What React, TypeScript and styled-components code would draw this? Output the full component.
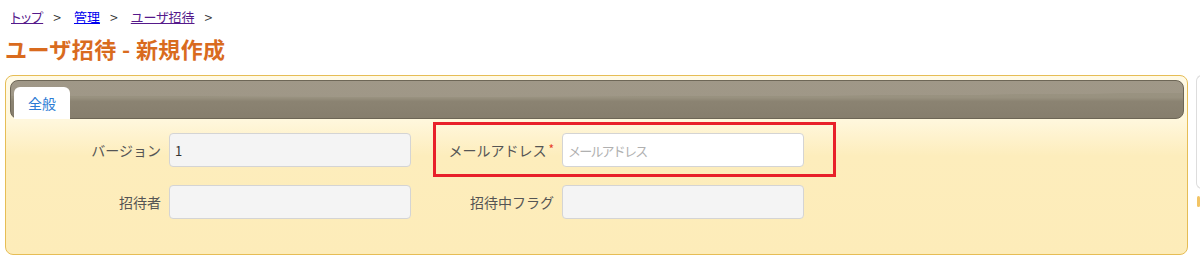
import styled, { createGlobalStyle } from "styled-components";

const GlobalStyle = createGlobalStyle`
  html, body {
    margin: 0;
    padding: 0;
    background: #ffffff;
    font-family: "Noto Sans CJK JP", "Noto Sans", sans-serif;
    color: #333;
  }
`;

const Page = styled.div`
  width: 1200px;
  height: 277px;
  overflow: hidden;
  padding: 6px 0 0 5px;
  box-sizing: border-box;
`;

const Breadcrumb = styled.nav`
  display: flex;
  align-items: center;
  height: 22px;
  padding-left: 6px;
  font-size: 13px;
  line-height: 22px;
  font-feature-settings: "palt";
`;

const Crumb = styled.a<{ $visited?: boolean }>`
  color: ${({ $visited }) => ($visited ? "#551a8b" : "#0000ee")};
  text-decoration: underline;
`;

const Sep = styled.span`
  color: #333;
  font-size: 14px;
  margin: 0 13px 0 10px;
`;

const Title = styled.h1`
  margin: 2px 0 0 0;
  height: 45px;
  font-size: 22px;
  line-height: 36px;
  font-weight: 700;
  letter-spacing: 0.4px;
  color: #d96b1e;
`;

const Body = styled.div`
  display: flex;
  align-items: flex-start;
  gap: 8px;
`;

const Panel = styled.section`
  flex: 0 0 1183px;
  height: 180px;
  box-sizing: border-box;
  border: 1px solid #e6bd55;
  border-radius: 8px;
  padding: 4px 3px 0 4px;
  background: linear-gradient(#fffae6 0px, #fff7dc 45px, #fdedbc 80px, #fdecb9 100%);
`;

const TabBar = styled.div`
  display: flex;
  align-items: flex-end;
  height: 39px;
  box-sizing: border-box;
  border: 1px solid #6d6656;
  border-radius: 8px;
  padding: 0 0 0 3px;
  background:
    radial-gradient(160% 70% at 35% 0%, rgba(160, 152, 136, 0.9) 0 60%, transparent 61%),
    linear-gradient(#9d9685 0%, #98917f 45%, #8b8372 55%, #867e6d 100%);
`;

const Tab = styled.div<{ $active?: boolean }>`
  width: 56px;
  height: 32px;
  display: flex;
  align-items: center;
  justify-content: center;
  margin-bottom: -1px;
  background: ${({ $active }) => ($active ? "#ffffff" : "transparent")};
  border-radius: 6px 6px 0 0;
  font-size: 14px;
  color: #2b7bd4;
`;

const Form = styled.div`
  display: grid;
  grid-template-columns: 370px 370px;
  column-gap: 23px;
  row-gap: 18px;
  padding: 14px 0 0 31px;
`;

const Field = styled.div<{ $marked?: boolean }>`
  position: relative;
  display: flex;
  align-items: center;
  gap: 8px;

  ${({ $marked }) =>
    $marked &&
    `
    &::after {
      content: "";
      position: absolute;
      top: -11px;
      left: -1px;
      right: -32px;
      bottom: -10px;
      border: 3px solid #e8202a;
      pointer-events: none;
    }
  `}
`;

const Label = styled.label`
  width: 120px;
  text-align: right;
  font-size: 14px;
  color: #555;
  white-space: nowrap;
`;

const Required = styled.span`
  color: #e8402a;
  font-size: 12px;
  vertical-align: top;
  margin-left: 2px;
`;

const Input = styled.input<{ $readonly?: boolean }>`
  width: 242px;
  height: 34px;
  box-sizing: border-box;
  border: 1px solid #d4d4d4;
  border-radius: 4px;
  background: ${({ $readonly }) => ($readonly ? "#f4f4f4" : "#ffffff")};
  padding: 0 5px;
  font-family: "Noto Sans CJK JP", "Noto Sans", sans-serif;
  font-size: 13px;
  color: #333;
  outline: none;

  &::placeholder {
    color: #b0b0b0;
    font-size: 13px;
    letter-spacing: -1.8px;
  }
`;

const SidePanel = styled.div`
  flex: 0 0 auto;
  display: flex;
  flex-direction: column;
  gap: 7px;
`;

const SideCard = styled.div`
  width: 20px;
  height: 114px;
  box-sizing: border-box;
  border: 1px solid #dddddd;
  border-right: none;
  border-radius: 6px 0 0 6px;
  background: #ffffff;
`;

const SideMark = styled.div`
  width: 3px;
  height: 11px;
  margin-left: 1px;
  border-radius: 2px;
  background: #f2c465;
`;

export default function App() {
  return (
    <>
      <GlobalStyle />
      <Page>
        <Breadcrumb>
          <Crumb href="#" $visited>
            トップ
          </Crumb>
          <Sep>&gt;</Sep>
          <Crumb href="#">管理</Crumb>
          <Sep>&gt;</Sep>
          <Crumb href="#" $visited>
            ユーザ招待
          </Crumb>
          <Sep>&gt;</Sep>
        </Breadcrumb>
        <Title>ユーザ招待 - 新規作成</Title>
        <Body>
          <Panel>
            <TabBar>
              <Tab $active>全般</Tab>
            </TabBar>
            <Form>
              <Field>
                <Label>バージョン</Label>
                <Input $readonly readOnly defaultValue="1" />
              </Field>
              <Field $marked>
                <Label>
                  メールアドレス<Required>*</Required>
                </Label>
                <Input placeholder="メールアドレス" />
              </Field>
              <Field>
                <Label>招待者</Label>
                <Input $readonly readOnly />
              </Field>
              <Field>
                <Label>招待中フラグ</Label>
                <Input $readonly readOnly />
              </Field>
            </Form>
          </Panel>
          <SidePanel>
            <SideCard />
            <SideMark />
          </SidePanel>
        </Body>
      </Page>
    </>
  );
}
